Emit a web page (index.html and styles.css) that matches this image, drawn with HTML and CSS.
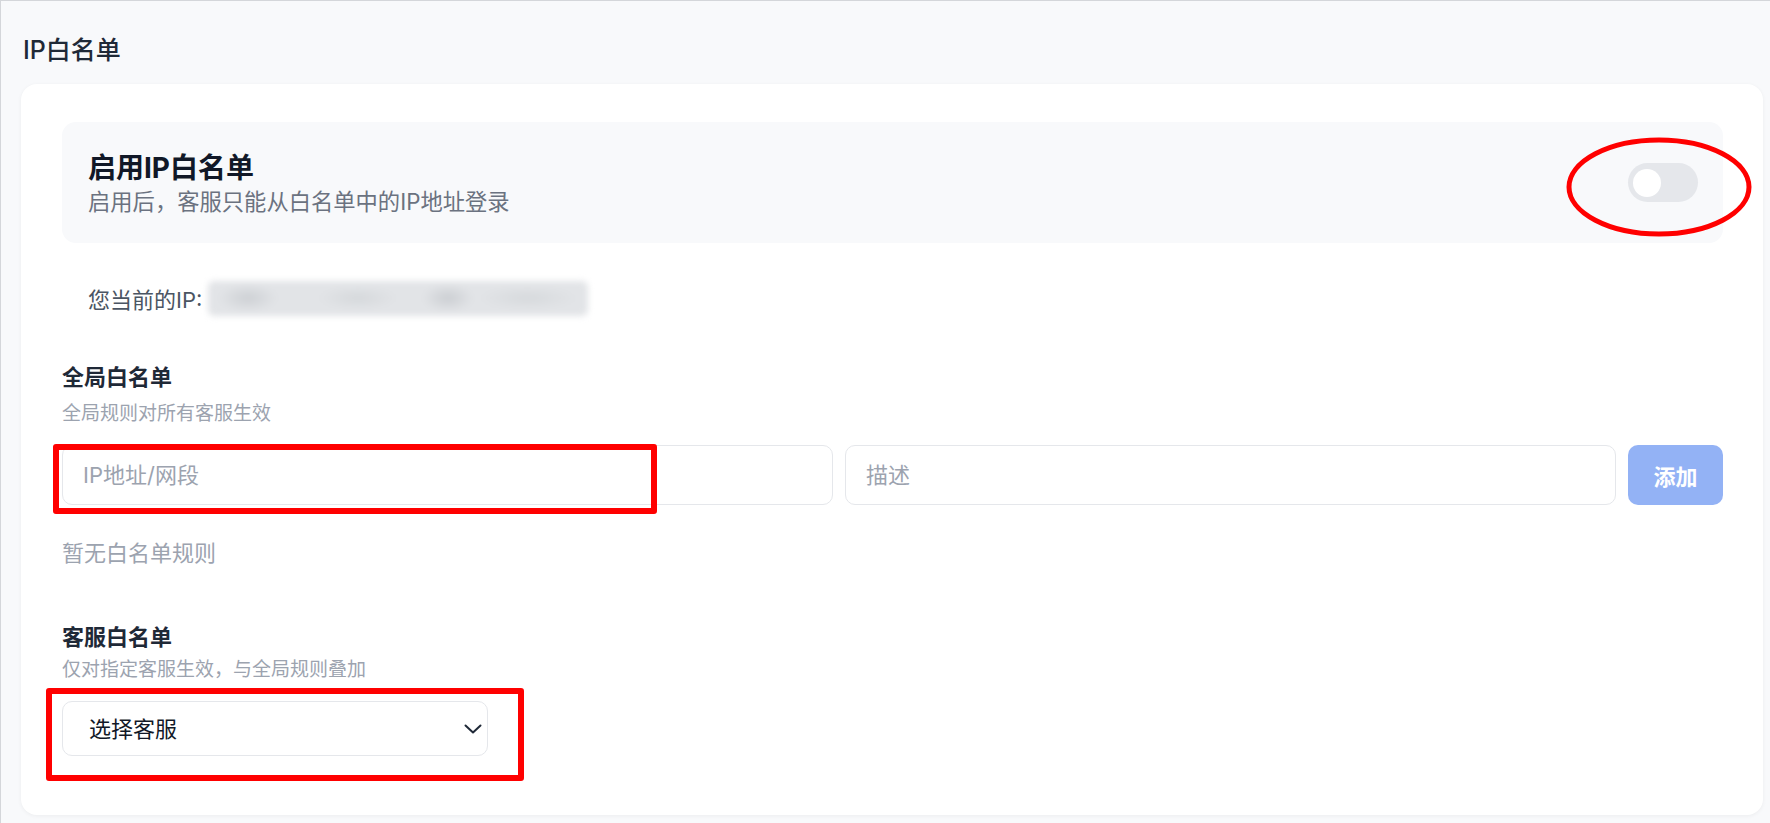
FILE: index.html
```html
<!DOCTYPE html>
<html lang="zh-CN">
  <head>
    <meta charset="UTF-8" />
    <meta name="viewport" content="width=device-width, initial-scale=1.0" />
    <title>IP白名单</title>
    <link rel="stylesheet" href="styles.css">
  </head>
  <body>
    <div class="page">
      <h1 class="page-title">IP白名单</h1>

      <div class="card">
        <div class="switch-panel">
          <div class="switch-text">
            <div class="switch-title">启用IP白名单</div>
            <div class="switch-desc">启用后，客服只能从白名单中的IP地址登录</div>
          </div>
          <span class="toggle"><span class="toggle-knob"></span></span>
        </div>

        <div class="current-ip">
          <span>您当前的IP:</span>
          <span class="ip-blur"></span>
        </div>

        <section class="rule-section">
          <h2 class="section-title">全局白名单</h2>
          <p class="section-desc">全局规则对所有客服生效</p>
          <div class="add-row">
            <input class="text-input" type="text" placeholder="IP地址/网段" />
            <input class="text-input" type="text" placeholder="描述" />
            <button class="add-btn" type="button">添加</button>
          </div>
          <p class="empty-tip">暂无白名单规则</p>
        </section>

        <section class="rule-section agent-section">
          <h2 class="section-title">客服白名单</h2>
          <p class="section-desc">仅对指定客服生效，与全局规则叠加</p>
          <div class="agent-select">
            <span>选择客服</span>
            <svg class="chevron" width="18" height="10" viewBox="0 0 18 10">
              <path d="M1.5 1.5 L9 8.5 L16.5 1.5" fill="none" stroke="#1f2937" stroke-width="2" stroke-linecap="round" stroke-linejoin="round" />
            </svg>
          </div>
        </section>
      </div>

      <!-- review marks drawn over the screenshot -->
      <svg class="mark mark-toggle" width="186" height="100" viewBox="0 0 186 100">
        <ellipse cx="93" cy="50" rx="90" ry="47" fill="none" stroke="#ff0000" stroke-width="5" />
      </svg>
      <div class="mark mark-box mark-ip"></div>
      <div class="mark mark-box mark-agent"></div>
    </div>
  </body>
</html>
```

FILE: styles.css
```css
* {
  box-sizing: border-box;
}
body {
  margin: 0;
  background-color: #f8f9fb;
  font-family: Inter, "Noto Sans CJK SC", sans-serif;
  color: #1f2937;
}
.page {
  position: relative;
  min-height: 100vh;
  padding: 32px 7px 0 22px;
  border-top: 1px solid #d4d6da;
  border-left: 1px solid #d4d6da;
}
.page-title {
  margin: 0;
  font-size: 25px;
  line-height: 34px;
  font-weight: 500;
  color: #1f2937;
}
.card {
  margin: 17px 0 0 -2px;
  background: #ffffff;
  border-radius: 16px;
  padding: 38px 40px 59px 41px;
  box-shadow: 0 1px 4px rgba(0, 0, 0, 0.05);
}
.switch-panel {
  display: flex;
  align-items: center;
  justify-content: space-between;
  height: 121px;
  padding: 2px 25px 0 26px;
  background: #f8f9fb;
  border-radius: 14px;
}
.switch-title {
  font-size: 28px;
  line-height: 34px;
  font-weight: 700;
  color: #111827;
}
.switch-desc {
  margin-top: 2px;
  font-size: 22.3px;
  line-height: 30px;
  color: #6b7280;
}
.toggle {
  display: flex;
  align-items: center;
  width: 70px;
  height: 39px;
  margin-top: -2px;
  padding: 0 5px;
  border-radius: 20px;
  background: #e5e7eb;
}
.toggle-knob {
  width: 28px;
  height: 28px;
  border-radius: 50%;
  background: #ffffff;
}
.current-ip {
  display: flex;
  align-items: center;
  gap: 6px;
  margin-top: 38px;
  padding-left: 26px;
  height: 34px;
  font-size: 22px;
  color: #4b5563;
}
.ip-blur {
  width: 380px;
  height: 35px;
  border-radius: 6px;
  background:
    radial-gradient(ellipse 30px 14px at 40px 17px, #cdd0d4, transparent),
    radial-gradient(ellipse 40px 12px at 150px 17px, #d5d8db, transparent),
    radial-gradient(ellipse 26px 14px at 240px 17px, #cbced2, transparent),
    radial-gradient(ellipse 50px 12px at 320px 17px, #d6d9dc, transparent),
    #e2e4e7;
  filter: blur(3px);
}
.rule-section {
  margin-top: 47px;
}
.section-title {
  margin: 0;
  font-size: 22px;
  line-height: 30px;
  font-weight: 700;
  color: #1f2937;
}
.section-desc {
  margin: 9px 0 0;
  font-size: 19px;
  line-height: 26px;
  color: #9ca3af;
}
.add-row {
  display: flex;
  gap: 12px;
  margin-top: 18px;
}
.text-input {
  flex: 1;
  height: 60px;
  padding: 0 20px;
  border: 1px solid #e5e7eb;
  border-radius: 10px;
  background: #ffffff;
  font-family: inherit;
  font-size: 22px;
  color: #111827;
  outline: none;
}
.text-input::placeholder {
  color: #9ca3af;
}
.add-btn {
  width: 95px;
  height: 60px;
  border: none;
  border-radius: 10px;
  background: #93b2f5;
  color: #ffffff;
  font-family: inherit;
  font-size: 22px;
  font-weight: 600;
  cursor: not-allowed;
}
.empty-tip {
  margin: 33px 0 0;
  font-size: 22px;
  line-height: 30px;
  color: #9ca3af;
}
.agent-section {
  margin-top: 54px;
}
.agent-section .section-desc {
  margin-top: 5px;
}
.agent-select {
  display: flex;
  align-items: center;
  justify-content: space-between;
  width: 426px;
  height: 55px;
  margin-top: 18px;
  padding: 0 5px 0 26px;
  border: 1px solid #e5e7eb;
  border-radius: 10px;
  font-size: 22px;
  line-height: 30px;
  color: #111827;
}
.mark {
  position: absolute;
  pointer-events: none;
}
.mark-toggle {
  left: 1565px;
  top: 136px;
}
.mark-box {
  border: 6px solid #ff0000;
  border-radius: 3px;
}
.mark-ip {
  left: 52px;
  top: 443px;
  width: 604px;
  height: 70px;
}
.mark-agent {
  left: 45px;
  top: 687px;
  width: 478px;
  height: 93px;
}
```
